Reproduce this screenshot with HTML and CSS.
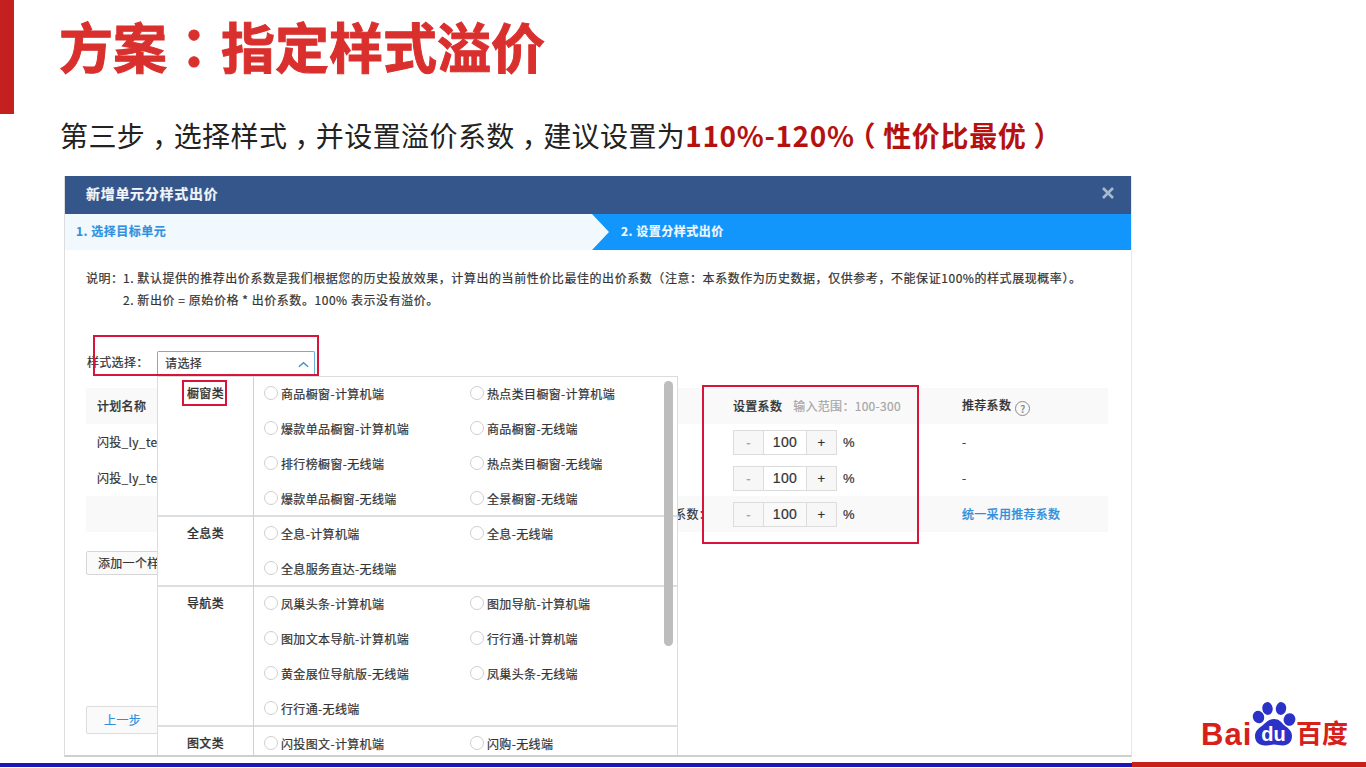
FILE: index.html
```html
<!DOCTYPE html>
<html lang="zh-CN">
<head>
<meta charset="utf-8">
<title>方案：指定样式溢价</title>
<link rel="stylesheet" href="styles.css">
</head>
<body>
<div class="slide">
  <header class="head">
    <div class="bar"></div>
    <h1 class="title">方案<span class="colon" lang="zh-TW">：</span>指定样式溢价</h1>
  </header>
  <p class="sub">第三步<span class="punc">，</span>选择样式<span class="punc">，</span>并设置溢价系数<span class="punc">，</span>建议设置为<b class="em">110%-120%<span class="punc">（</span>性价比最优<span class="punc">）</span></b></p>

  <section class="dialog">
    <div class="dlg-head">
      <span>新增单元分样式出价</span>
      <svg class="close" viewBox="0 0 12 12" width="12" height="12"><path d="M1 1 11 11M11 1 1 11" stroke="#a9b9cf" stroke-width="2.6" fill="none"/></svg>
    </div>
    <div class="steps">
      <div class="step1">1. 选择目标单元</div>
      <div class="step2">2. 设置分样式出价</div>
    </div>
    <div class="dlg-body">
      <div class="notes">
        <span class="notes-label">说明：</span>
        <div>
          <div class="note">1. 默认提供的推荐出价系数是我们根据您的历史投放效果，计算出的当前性价比最佳的出价系数（注意：本系数作为历史数据，仅供参考，不能保证100%的样式展现概率）。</div>
          <div class="note">2. 新出价 = 原始价格 * 出价系数。100% 表示没有溢价。</div>
        </div>
      </div>
      <div class="select-row">
        <span class="select-label">样式选择：</span>
        <div class="select"><span class="select-text">请选择</span>
          <svg viewBox="0 0 12 7" width="11" height="7"><path d="M1 6 6 1.5 11 6" stroke="#3f8fc4" stroke-width="1.4" fill="none"/></svg>
        </div>
      </div>
      <div class="table">
        <div class="row row-head">
          <span>计划名称</span>
          <span class="set">设置系数<i class="range">输入范围：100-300</i></span>
          <span>推荐系数<i class="help">?</i></span>
        </div>
        <div class="row">
          <span>闪投_ly_test</span>
          <span class="stepper"><i class="btn minus">-</i><i class="val">100</i><i class="btn">+</i><em class="pct">%</em></span>
          <span>-</span>
        </div>
        <div class="row">
          <span>闪投_ly_test</span>
          <span class="stepper"><i class="btn minus">-</i><i class="val">100</i><i class="btn">+</i><em class="pct">%</em></span>
          <span>-</span>
        </div>
        <div class="row row-foot">
          <span class="foot-label">统一设置系数：</span>
          <span class="stepper"><i class="btn minus">-</i><i class="val">100</i><i class="btn">+</i><em class="pct">%</em></span>
          <a class="link">统一采用推荐系数</a>
        </div>
      </div>
      <div class="add">添加一个样式</div>
      <div class="prev">上一步</div>
    </div>
  </section>

  <div class="dropdown">
    <div class="group">
      <div class="cat">橱窗类</div>
      <div class="opts">
        <label class="opt"><i></i>商品橱窗-计算机端</label><label class="opt"><i></i>热点类目橱窗-计算机端</label>
        <label class="opt"><i></i>爆款单品橱窗-计算机端</label><label class="opt"><i></i>商品橱窗-无线端</label>
        <label class="opt"><i></i>排行榜橱窗-无线端</label><label class="opt"><i></i>热点类目橱窗-无线端</label>
        <label class="opt"><i></i>爆款单品橱窗-无线端</label><label class="opt"><i></i>全景橱窗-无线端</label>
      </div>
    </div>
    <div class="group">
      <div class="cat">全息类</div>
      <div class="opts">
        <label class="opt"><i></i>全息-计算机端</label><label class="opt"><i></i>全息-无线端</label>
        <label class="opt"><i></i>全息服务直达-无线端</label>
      </div>
    </div>
    <div class="group">
      <div class="cat">导航类</div>
      <div class="opts">
        <label class="opt"><i></i>凤巢头条-计算机端</label><label class="opt"><i></i>图加导航-计算机端</label>
        <label class="opt"><i></i>图加文本导航-计算机端</label><label class="opt"><i></i>行行通-计算机端</label>
        <label class="opt"><i></i>黄金展位导航版-无线端</label><label class="opt"><i></i>凤巢头条-无线端</label>
        <label class="opt"><i></i>行行通-无线端</label>
      </div>
    </div>
    <div class="group">
      <div class="cat">图文类</div>
      <div class="opts">
        <label class="opt"><i></i>闪投图文-计算机端</label><label class="opt"><i></i>闪购-无线端</label>
      </div>
    </div>
    <div class="scroll"></div>
  </div>

  <div class="mark mark-select"></div>
  <div class="mark mark-cat"></div>
  <div class="mark mark-coef"></div>

  <div class="logo">
    <span class="bai">Bai</span>
    <svg class="paw" viewBox="0 0 44 44" width="44" height="44">
      <ellipse cx="6.500" cy="15" rx="5.600" ry="6.400" transform="rotate(-20 6.500 15)" fill="#2a32c8"/>
      <ellipse cx="15.500" cy="6.500" rx="5.200" ry="6.400" transform="rotate(-8 15.500 6.500)" fill="#2a32c8"/>
      <ellipse cx="29" cy="6.500" rx="5.200" ry="6.400" transform="rotate(8 29 6.500)" fill="#2a32c8"/>
      <ellipse cx="37.500" cy="17.500" rx="5.800" ry="6.400" transform="rotate(20 37.500 17.500)" fill="#2a32c8"/>
      <path d="M22 17c5 0 7 3 10 6 4 3 8 6 8 11 0 6-4 9.500-9 9.500-4 0-6-1-9-1s-5 1-9 1c-6 0-10-3.500-10-9.500 0-5 4-8 8-11 3-3 6-6 11-6z" fill="#2a32c8"/>
      <text x="21.500" y="39" text-anchor="middle" class="du">du</text>
    </svg>
    <span class="baidu-cn">百度</span>
  </div>

  <div class="rule-blue"></div>
  <div class="rule-red"></div>
</div>
</body>
</html>
```
FILE: styles.css
```css
* { box-sizing: border-box; }
html, body { margin: 0; padding: 0; }
body {
  width: 1366px;
  height: 768px;
  overflow: hidden;
  background: #fff;
  font-family: "Noto Sans CJK SC", "Liberation Sans", sans-serif;
  color: #333;
}
i, em { font-style: normal; }
.slide { position: relative; width: 1366px; height: 768px; overflow: hidden; }

.head { display: flex; height: 114px; }
.bar { width: 14px; height: 114px; background: #c3201f; }
.title {
  margin: 11px 0 0 45px;
  font-size: 54px;
  line-height: 70px;
  font-weight: 700;
  color: #d9302e;
  -webkit-text-stroke: 1px #d9302e;
  white-space: nowrap;
}
.colon { font-family: "Noto Sans CJK TC", "Noto Sans CJK SC", sans-serif; }
.sub {
  margin: 0 0 0 60px;
  height: 62px;
  font-size: 28px;
  line-height: 42px;
  letter-spacing: 0.42px;
  color: #222;
  white-space: nowrap;
}
.punc { font-feature-settings: "halt"; padding: 0 0.25em; }
.em { color: #b5120f; font-weight: 700; letter-spacing: 0.65px; }

.dialog {
  margin-left: 64px;
  width: 1068px;
  height: 581px;
  border-right: 1px solid #e8e8e8;
  border-bottom: 2px solid #cfcfcf;
  border-left: 1px solid #ddd;
  background: #fff;
  font-size: 12px;
  display: flex;
  flex-direction: column;
  -webkit-text-stroke: 0.2px currentColor;
}
.dlg-head {
  height: 38px;
  flex: none;
  background: #34568b;
  color: #f2f5f9;
  font-size: 14px;
  font-weight: 700;
  letter-spacing: 0.7px;
  display: flex;
  align-items: center;
  justify-content: space-between;
  padding: 0 17px 5px 21px;
}
.steps { display: flex; height: 36px; flex: none; background: #f2f9fe; font-weight: 700; letter-spacing: 0.5px; }
.step1 { width: 527px; padding-left: 11px; line-height: 34px; color: #2f91de; }
.step2 {
  flex: 1;
  padding-left: 29px;
  line-height: 34px;
  color: #f0f8ff;
  background: #1296fb;
  clip-path: polygon(0 0, 100% 0, 100% 100%, 0 100%, 17px 50%);
}
.dlg-body { flex: 1; padding: 17px 23px 0 21px; position: relative; }
.notes { display: flex; letter-spacing: 0.56px; white-space: nowrap; }
.notes-label { width: 37px; line-height: 22px; }
.note { line-height: 22px; }
.select-row { display: flex; align-items: center; margin-top: 40px; height: 25px; }
.select-label { width: 70px; margin-left: 1px; margin-top: -5px; letter-spacing: 0.3px; }
.select {
  width: 158px;
  height: 25px;
  border: 1px solid #6eb0dc;
  border-bottom: 0;
  border-radius: 2px 2px 0 0;
  padding: 0 5px 0 7px;
  display: flex;
  align-items: center;
  justify-content: space-between;
  letter-spacing: 0.4px;
}
.select-text { margin-top: -3px; }
.table { margin-top: 12px; width: 1022px; }
.row {
  display: grid;
  grid-template-columns: 636px 229px 1fr;
  padding-left: 11px;
  height: 36px;
  align-items: center;
  letter-spacing: 0.3px;
  padding-bottom: 1px;
}
.row-head { background: #f9f9f9; font-weight: 500; }
.row-foot { background: #f9f9f9; }
.foot-label { text-align: right; padding-right: 22px; }
.range { margin-left: 11px; color: #a6a6a6; font-weight: 400; }
.help {
  display: inline-block;
  width: 15px;
  height: 15px;
  margin-left: 4px;
  border: 1px solid #8a8a8a;
  border-radius: 50%;
  font-size: 10px;
  line-height: 13px;
  text-align: center;
  color: #8a8a8a;
  vertical-align: -3px;
  letter-spacing: 0;
}
.stepper { display: flex; align-items: center; font-family: "Liberation Sans", sans-serif; margin-top: 1px; }
.btn {
  width: 31px;
  height: 25px;
  background: #f7f7f7;
  border: 1px solid #dcdcdc;
  text-align: center;
  line-height: 23px;
  font-size: 13px;
  color: #333;
}
.minus { color: #a0a0a0; }
.val {
  width: 42px;
  height: 25px;
  border-top: 1px solid #dcdcdc;
  border-bottom: 1px solid #dcdcdc;
  text-align: center;
  line-height: 23px;
  font-size: 14px;
}
.pct { margin-left: 6px; font-size: 13px; }
.link { color: #2f8fdc; font-weight: 500; }
.add {
  margin-top: 19px;
  width: 90px;
  height: 24px;
  border: 1px solid #d6d6d6;
  border-radius: 2px;
  background: #fafafa;
  padding-left: 11px;
  line-height: 22px;
  white-space: nowrap;
  letter-spacing: 0.3px;
}
.prev {
  margin-top: 131px;
  width: 75px;
  height: 28px;
  border: 1px solid #dcdcdc;
  border-radius: 2px;
  background: #fafafa;
  padding-left: 17px;
  line-height: 25px;
  color: #2f8fdc;
  letter-spacing: 0.4px;
}

.dropdown {
  position: absolute;
  left: 157px;
  top: 376px;
  width: 521px;
  height: 379px;
  overflow: hidden;
  background: #fff;
  border: 1px solid #dcdcdc;
  border-bottom: 0;
  font-size: 12px;
  letter-spacing: 0.35px;
  -webkit-text-stroke: 0.2px currentColor;
}
.group { display: grid; grid-template-columns: 96px 1fr; box-shadow: inset 0 -1px 0 #dedede, 0 1px 0 #dedede; }
.group:first-child { margin-top: -1px; }
.cat {
  border-right: 1px solid #cfcfcf;
  text-align: center;
  line-height: 33px;
  font-weight: 500;
}
.opts { display: grid; grid-template-columns: 206px 206px; padding-left: 10px; }
.opt { display: flex; align-items: center; height: 35px; gap: 3px; white-space: nowrap; padding-bottom: 1px; }
.opt i {
  width: 14px;
  height: 14px;
  border: 1px solid #cfcfcf;
  border-radius: 50%;
  flex: none;
  background: #fff;
}
.scroll {
  position: absolute;
  left: 506px;
  top: 4px;
  width: 9px;
  height: 265px;
  border-radius: 5px;
  background: #bdbdbd;
}

.mark { position: absolute; border: 2px solid #d8143a; }
.mark-select { left: 93px; top: 335px; width: 226px; height: 41px; }
.mark-cat { left: 182px; top: 380px; width: 45px; height: 26px; }
.mark-coef { left: 702px; top: 385px; width: 217px; height: 159px; }

.logo {
  position: absolute;
  left: 1201px;
  top: 702px;
  display: flex;
  align-items: flex-end;
  height: 45px;
}
.bai {
  font-family: "Liberation Sans", sans-serif;
  font-weight: 700;
  font-size: 31px;
  line-height: 24px;
  color: #d8201a;
  letter-spacing: 1px;
  width: 51px;
}
.paw { flex: none; margin-bottom: 1px; }
.du {
  font-family: "Liberation Sans", sans-serif;
  font-size: 20px;
  font-weight: 700;
  fill: #fff;
}
.baidu-cn {
  font-size: 26px;
  line-height: 30px;
  font-weight: 700;
  color: #d8201a;
  white-space: nowrap;
}

.rule-blue { position: absolute; left: 0; top: 763px; width: 1132px; height: 4px; background: #1c16b8; }
.rule-red { position: absolute; left: 1132px; top: 762px; width: 234px; height: 5px; background: #c9201b; }
```
